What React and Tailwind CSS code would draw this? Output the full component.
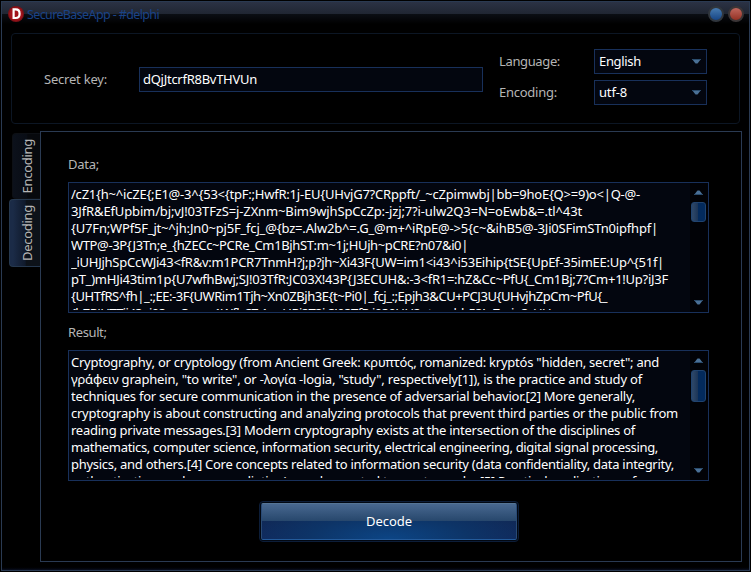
import { useLayoutEffect, useRef, useState } from 'react';

// Each line is stored with the width, in pixels, that it occupies.
const DATA = [
  ['/cZ1{h~^icZE{;E1@-3^{53<{tpF:;HwfR:1j-EU{UHvjG7?CRppft/_~cZpimwbj|bb=9hoE{Q>=9)o<|Q-@-', 569],
  ['3JfR&EfUpbim/bj;vJ!03TFzS=j-ZXnm~Bim9wjhSpCcZp:-jzj;7?i-ulw2Q3=N=oEwb&=.tl^43t', 511],
  ['{U7Fn;WPf5F_jt~^jh:Jn0~pj5F_fcj_@{bz=.Alw2b^=.G_@m+^iRpE@->5{c~&ihB5@-3Ji0SFimSTn0ipfhpf|', 587],
  ['WTP@-3P{J3Tn;e_{hZECc~PCRe_Cm1BjhST:m~1j;HUjh~pCRE?n07&i0|', 397],
  ['_iUHJjhSpCcWJi43<fR&v:m1PCR7TnmH?j;p?jh~Xi43F{UW=im1<i43^i53Eihip{tSE{UpEf-35imEE:Up^{51f|', 593],
  ['pT_)mHJi43tim1p{U7wfhBwj;SJ!03TfR:JC03X!43P{J3ECUH&:-3<fR1=:hZ&Cc~PfU{_Cm1Bj;7?Cm+1!Up?iJ3F', 597],
  ['{UHTfRS^fh|_:;EE:-3F{UWRim1Tjh~Xn0ZBjh3E{t~Pi0|_fcj_:;Epjh3&CU+PCJ3U{UHvjhZpCm~PfU{_', 536],
  ['{hZRJHTTji43=i03=pCpmu1WfhC7:1n~HRi3T3i;S!03TfR:i030HU2pt=uuhh53!n7min3rHU', 480],
];
const RESULT = [
  ['Cryptography, or cryptology (from Ancient Greek: κρυπτός, romanized: kryptós "hidden, secret"; and', 588],
  ['γράφειν graphein, "to write", or -λογία -logia, "study", respectively[1]), is the practice and study of', 571],
  ['techniques for secure communication in the presence of adversarial behavior.[2] More generally,', 564],
  ['cryptography is about constructing and analyzing protocols that prevent third parties or the public from', 607],
  ['reading private messages.[3] Modern cryptography exists at the intersection of the disciplines of', 564],
  ['mathematics, computer science, information security, electrical engineering, digital signal processing,', 587],
  ['physics, and others.[4] Core concepts related to information security (data confidentiality, data integrity,', 603],
  ['authentication, and non-repudiation) are also central to cryptography.[5] Practical applications of', 565],
];

// Text whose letter spacing is adjusted so that it takes up the given length.
function Fit({ children, length, vertical = false, className = '' }) {
  const ref = useRef(null);
  const [spacing, setSpacing] = useState(0);
  useLayoutEffect(() => {
    const box = ref.current.getBoundingClientRect();
    const natural = vertical ? box.height : box.width;
    setSpacing((length - natural) / children.length);
  }, []);
  return (
    <span ref={ref} className={`inline-block whitespace-pre ${className}`} style={{ letterSpacing: spacing }}>
      {children}
    </span>
  );
}

function Arrow({ up }) {
  return (
    <svg width="9" height="5" viewBox="0 0 9 5" className={up ? 'rotate-180' : ''}>
      <path d="M0 0H9L5.5 4.5H3.5Z" fill="#4a7096" />
      <path d="M0 0H9L8 1H1Z" fill="#294b6c" />
    </svg>
  );
}

function Memo({ lines, thumb }) {
  return (
    <div className="flex h-[131px] w-[641px] border border-[#18305a] bg-[#03060f] pl-0.5">
      <div className="mt-[3px] h-[124px] min-w-0 flex-1 overflow-hidden text-white">
        {lines.map(([text, length]) => (
          <div key={text} className="h-[17px]">
            <Fit length={length}>{text}</Fit>
          </div>
        ))}
      </div>
      <div className="flex w-[18px] shrink-0 flex-col items-center bg-[#010206] pt-[7px] pr-0.5 pb-[7px]">
        <Arrow up />
        <div className={`mt-[7px] w-[15px] rounded-[3px] border border-[#20436f] bg-linear-to-r from-[#2b4566] from-10% via-[#1c3557] via-45% to-[#032a5c] to-50% ${thumb}`} />
        <div className="flex-1" />
        <Arrow />
      </div>
    </div>
  );
}

function Select({ value, length }) {
  return (
    <div className="flex h-[25px] w-[113px] items-center justify-between border border-[#18305a] bg-[#03060f] pr-[5px] pl-1 text-white">
      <Fit length={length}>{value}</Fit>
      <Arrow />
    </div>
  );
}

function Tab({ label, active, length }) {
  return (
    <div
      className={
        active
          ? 'flex h-[68px] w-[31px] items-center justify-center rounded-l border border-r-0 border-[#26384e] bg-linear-to-r from-[#1b2b47] from-10% via-[#101a2c] via-50% to-[#0d1219] to-55% pl-[5px]'
          : 'ml-0.5 flex h-[66px] w-[28px] items-center justify-center rounded-l border border-r-0 border-[#0d1015] bg-linear-to-r from-[#0c111b] via-[#090d15] via-50% to-[#07090d] to-55% pl-0.5'
      }
    >
      <Fit vertical length={length} className="rotate-180 [writing-mode:vertical-rl]">
        {label}
      </Fit>
    </div>
  );
}

export default function App() {
  return (
    <div className="h-[572px] w-[751px] overflow-hidden bg-black p-px font-['Noto_Sans',sans-serif] text-[13px] leading-[17px] text-[#b5b5b5]">
      <div className="flex h-[570px] w-[749px] flex-col border border-[#2a3a52] bg-linear-to-t from-[#0a1020] to-black to-[4px]">
        <header className="flex h-[31px] shrink-0 items-start bg-[linear-gradient(#2b3244_0px,#202632_12px,#0b0e14_12px,#000_22px)] pl-[6px]">
          <svg width="16" height="16" viewBox="0 0 16 16" className="mt-1">
            <circle cx="8" cy="8" r="8" fill="#7d1117" />
            <circle cx="8" cy="8" r="6.8" fill="#a2131b" />
            <path d="M5.6 3.4H7.6Q11.6 3.4 11.6 7.7T7.6 12H5.6Z" fill="none" stroke="#fff" strokeWidth="2.2" />
          </svg>
          <div className="mt-1 ml-[3px] flex-1 text-[#194388]">
            <Fit length={132} className="text-[12.5px]">SecureBaseApp - #delphi</Fit>
          </div>
          <div className="mt-1 mr-[5px] flex gap-1">
            <i className="size-4 rounded-full border-2 border-[#30363d] bg-linear-to-b from-[#477bb0] to-[#164585]" />
            <i className="size-4 rounded-full border-2 border-[#3b3536] bg-linear-to-b from-[#c0665d] to-[#943023]" />
          </div>
        </header>

        <section className="ml-[9px] flex h-[91px] w-[729px] shrink-0 rounded-[4px] border border-[#0c1624] bg-black">
          <div className="mt-[37px] ml-8 w-[95px]">
            <Fit length={63}>Secret key:</Fit>
          </div>
          <div className="mt-[33px] flex h-[25px] w-[344px] items-center border border-[#18305a] bg-[#03060f] pl-[3px] text-white">
            <Fit length={114}>dQjJtcrfR8BvTHVUn</Fit>
          </div>
          <div className="mt-[15px] ml-4 flex flex-col gap-1.5">
            <div className="flex h-[25px] items-center">
              <div className="w-[95px]">
                <Fit length={61}>Language:</Fit>
              </div>
              <Select value="English" length={42} />
            </div>
            <div className="flex h-[25px] items-center">
              <div className="w-[95px]">
                <Fit length={58}>Encoding:</Fit>
              </div>
              <Select value="utf-8" length={28} />
            </div>
          </div>
        </section>

        <div className="mt-[7px] flex">
          <nav className="flex w-[38px] flex-col items-end pt-0.5">
            <Tab label="Encoding" length={54.5} />
            <Tab label="Decoding" length={56} active />
          </nav>
          <main className="h-[431px] w-[702px] border border-[#2a3a52] bg-black pt-6 pl-[27px]">
            <div className="h-[26px]">
              <Fit length={31}>Data;</Fit>
            </div>
            <Memo lines={DATA} thumb="h-5" />
            <div className="mt-[11px] h-[26px]">
              <Fit length={38.5}>Result;</Fit>
            </div>
            <Memo lines={RESULT} thumb="h-8" />
            <button className="mt-[20px] ml-[191px] block h-[41px] w-[260px] rounded-[4px] border border-[#0c1d38] bg-[#020812] p-px">
              <span className="flex h-full items-center justify-center rounded-[2px] border border-t-[#557596] border-r-[#294a75] border-b-[#245b9b] border-l-[#294a75] bg-[linear-gradient(#486890,#26466b_50%,transparent_50%),radial-gradient(ellipse_at_bottom,#0c4585,#0d3467_45%,transparent_85%),linear-gradient(#10284f,#11265a)] text-white">
                <Fit length={46}>Decode</Fit>
              </span>
            </button>
          </main>
        </div>
      </div>
    </div>
  );
}
